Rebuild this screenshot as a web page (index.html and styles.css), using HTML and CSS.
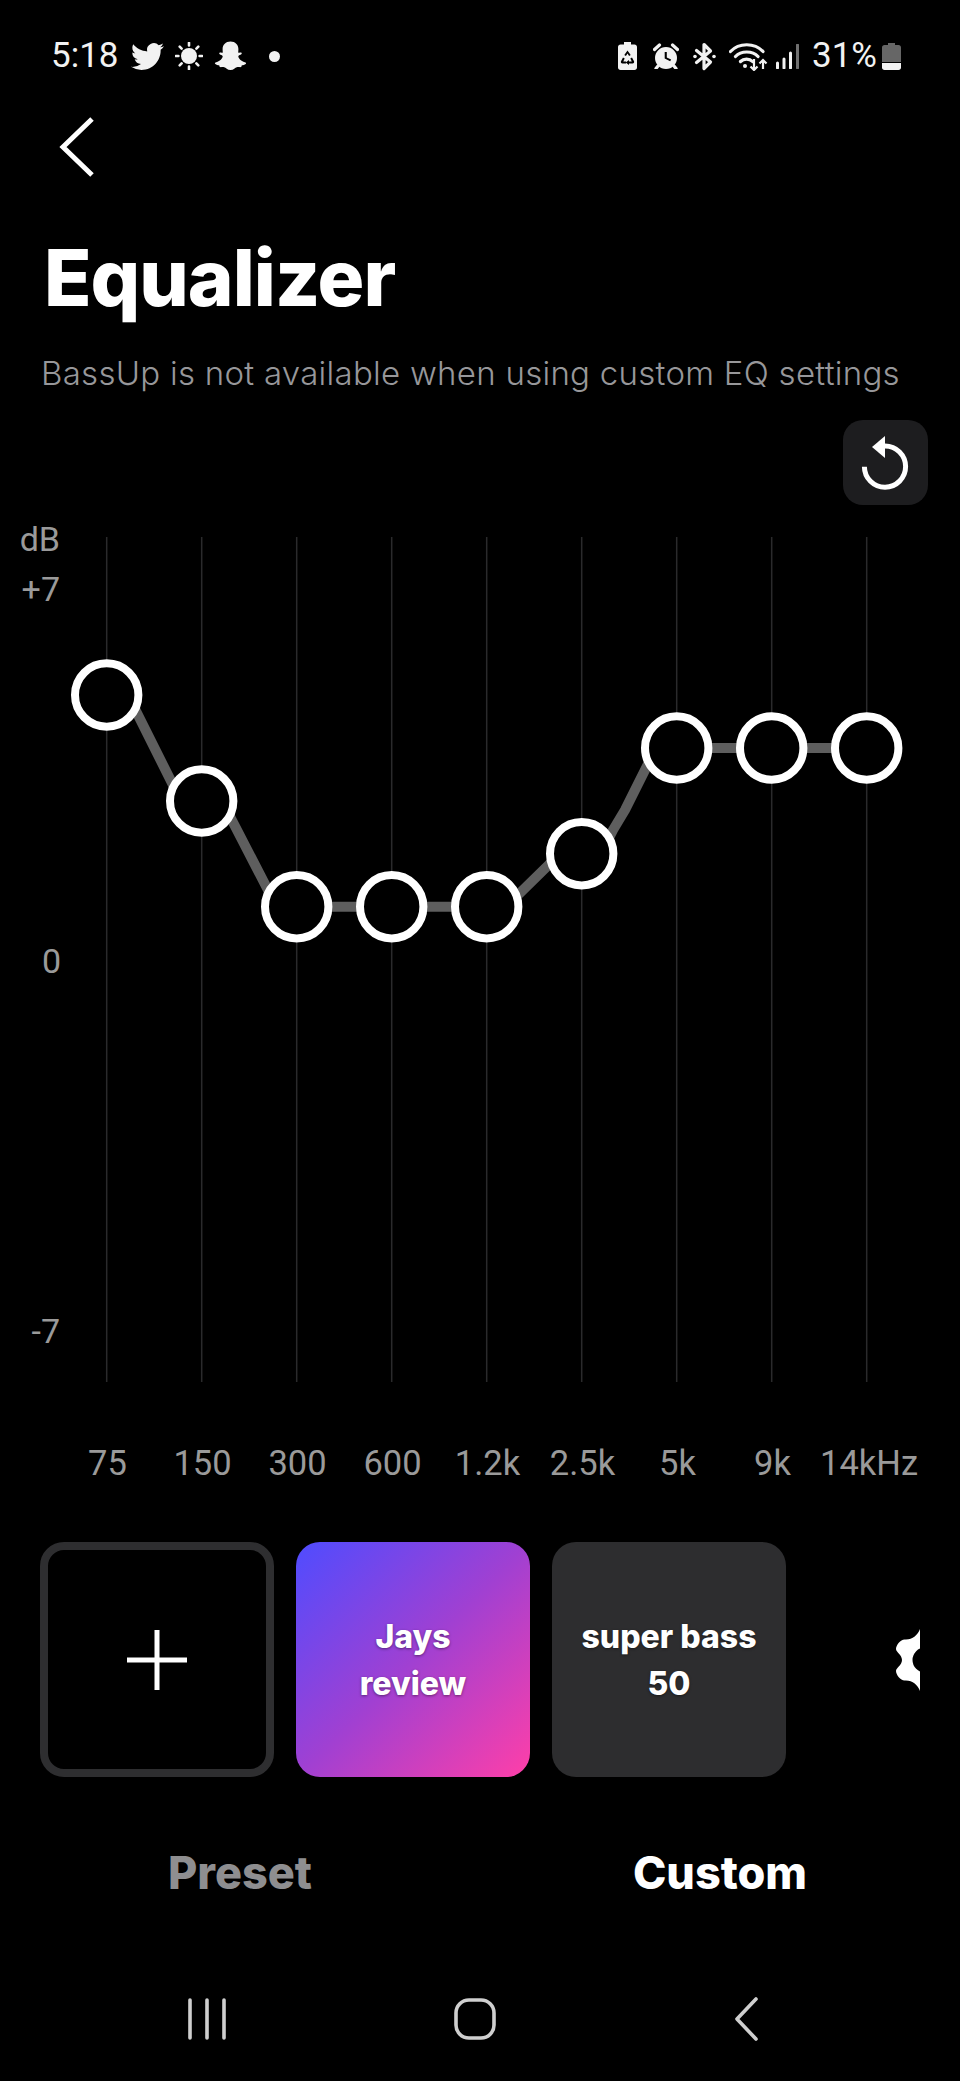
FILE: index.html
```html
<!DOCTYPE html>
<html lang="en">
<head>
<meta charset="utf-8">
<title>Equalizer</title>
<link rel="stylesheet" href="styles.css">
</head>
<body>
<main class="screen">
  <header class="status">
    <div class="status-left">
      <span class="status-text">5:18</span>
      <svg class="ic-twitter" viewBox="0 0 24 24"><path d="M23.953 4.57a10 10 0 01-2.825.775 4.958 4.958 0 002.163-2.723c-.951.555-2.005.959-3.127 1.184a4.92 4.92 0 00-8.384 4.482C7.69 8.095 4.067 6.13 1.64 3.162a4.822 4.822 0 00-.666 2.475c0 1.71.87 3.213 2.188 4.096a4.904 4.904 0 01-2.228-.616v.06a4.923 4.923 0 003.946 4.827 4.996 4.996 0 01-2.212.085 4.936 4.936 0 004.604 3.417 9.867 9.867 0 01-6.102 2.105c-.39 0-.779-.023-1.17-.067a13.995 13.995 0 007.557 2.209c9.053 0 13.998-7.496 13.998-13.985 0-.21 0-.42-.015-.63A9.935 9.935 0 0024 4.59z"/></svg>
      <svg class="ic-sun" viewBox="0 0 28 28"><circle cx="14" cy="14" r="8"/><g class="ray"><path d="M14 .8v2.6M14 24.6v2.6M.8 14h2.6M24.6 14h2.6M4.7 4.7l1.9 1.9M21.4 21.4l1.9 1.9M4.7 23.3l1.9-1.9M21.4 6.6l1.9-1.9"/></g></svg>
      <svg class="ic-snap" viewBox="0 0 33 30"><path d="M16.5 .5c4.7 0 7.9 3.3 7.9 7.6 0 1.3-.1 2.4-.2 3.3.9.5 2 0 2.8.1.9.2 1 1.2.3 1.7-.9.7-2.5 1-2.9 1.9-.3.7.2 1.5.8 2.4 1 1.5 3.4 3.4 6.2 4 .8.2.9.9.3 1.4-1 .8-2.8 1.100-3.700 1.400-.5.2-.4 1.600-1 1.800-1 .3-2.600-.3-4.200.1-1.700.4-3 2.800-6.300 2.800s-4.600-2.400-6.300-2.800c-1.600-.4-3.200.2-4.200-.1-.6-.2-.5-1.600-1-1.800-.9-.3-2.700-.6-3.700-1.400-.6-.5-.5-1.200.3-1.400 2.800-.6 5.200-2.500 6.200-4 .6-.9 1.100-1.700.8-2.400-.4-.9-2-1.200-2.900-1.900-.7-.5-.6-1.500.3-1.700.8-.1 1.900.4 2.800-.1-.1-.9-.2-2-.2-3.300 0-4.300 3.200-7.600 7.900-7.600z"/></svg>
      <span class="status-dot"></span>
    </div>
    <div class="status-right">
      <svg class="ic-batsave" viewBox="0 0 19 28"><path fill-rule="evenodd" d="M6 0h7v2.500h3.500c1.400 0 2.500 1.100 2.500 2.500v20.500c0 1.400-1.100 2.500-2.500 2.500h-14C1.100 28 0 26.900 0 25.500V5c0-1.400 1.100-2.500 2.500-2.500H6zM9.500 8.500L6.300 13l1.600 1 1.600-2.500 1.600 2.500 1.600-1zM5 15.500l-2 3.700c-.5 1 .2 2.300 1.400 2.300H8v-2H5.300l1.400-3zM14 15.500l-1.700 1 1.500 3H11V18l-3.300 2.500L11 23v-1.500h3.600c1.200 0 1.900-1.300 1.400-2.300z"/></svg>
      <svg class="ic-alarm" viewBox="0 0 26 26"><path fill-rule="evenodd" d="M13 4a11 11 0 110 22 11 11 0 010-22zm-1.300 5v6.500l5.500 2.800.9-1.700-4.300-2.200V9z"/><path class="ray-thick" d="M1.500 6.500L6.500 2M24.500 6.500L19.500 2M5 23l-2 2.500M21 23l2 2.500"/></svg>
      <svg class="ic-bt" viewBox="0 0 23 29"><path class="ray-thick" d="M3.500 8.500l14 11.500-6.500 6.500V2.500l6.500 6.500-14 11.500"/><circle cx="2" cy="14.500" r="1.800"/><circle cx="21" cy="14.500" r="1.800"/></svg>
      <svg class="ic-wifi" viewBox="0 0 39 29"><path class="ray-wifi" d="M1.500 9.500c8.500-9 24-9 32.500 0M6.500 14.500c5.500-6 17-6 22.500 0M11.500 19.500c3.200-3.200 9-3.200 12 0"/><circle cx="16" cy="24" r="2"/><path class="ray-thin" d="M25 17v11M21.500 24.500l3.500 3.500 3.500-3.500M34 27V18M30.500 21.500l3.500-3.500 3.500 3.500"/></svg>
      <svg class="ic-signal" viewBox="0 0 24 25"><path class="bar" d="M1.500 19v5M8 15v9M14.500 9v15"/><path class="bar bar-dim" d="M21.500 1v23"/></svg>
      <span class="status-text status-pct">31%</span>
      <svg class="ic-battery" viewBox="0 0 19 27"><path class="bat-body" d="M6 0h7v2h3.500C18 2 19 3 19 4.500V19H0V4.500C0 3 1 2 2.500 2H6z"/><path d="M0 20h19v4.500c0 1.500-1 2.500-2.500 2.500h-14C1 27 0 26 0 24.500z"/></svg>
    </div>
  </header>

  <button class="back" aria-label="Back">
    <svg viewBox="0 0 36 62"><path d="M34 3L5 31 34 59"/></svg>
  </button>

  <h1 class="title">Equalizer</h1>
  <p class="subtitle">BassUp is not available when using custom EQ settings</p>

  <div class="reset-row">
    <button class="reset" aria-label="Reset">
      <svg viewBox="0 0 85 85"><path class="reset-arc" d="M42 26A20.600 20.600 0 1 1 21.400 46.700"/><path class="reset-head" d="M42 16V38L29 27z"/></svg>
    </button>
  </div>

  <svg class="chart" viewBox="0 515 960 875">
    <g class="grid">
      <path d="M106.700 537V1382M201.700 537V1382M296.700 537V1382M391.700 537V1382M486.700 537V1382M581.700 537V1382M676.700 537V1382M771.700 537V1382M866.700 537V1382"/>
    </g>
    <text class="axis" x="60" y="551">dB</text>
    <text class="axis" x="60" y="601">+7</text>
    <text class="axis" x="61" y="973">0</text>
    <text class="axis" x="60" y="1343">-7</text>
    <path class="curve" d="M106.700 695H128L181 801H201.700H222L276.600 906.700H486.700H506L560 853.700H581.700H601L613 830L625 810L656 748H866.700"/>
    <g class="nodes">
      <circle cx="106.700" cy="695" r="31.700"/>
      <circle cx="201.700" cy="801" r="31.700"/>
      <circle cx="296.700" cy="906.700" r="31.700"/>
      <circle cx="391.700" cy="906.700" r="31.700"/>
      <circle cx="486.700" cy="906.700" r="31.700"/>
      <circle cx="581.700" cy="853.700" r="31.700"/>
      <circle cx="676.700" cy="748" r="31.700"/>
      <circle cx="771.700" cy="748" r="31.700"/>
      <circle cx="866.700" cy="748" r="31.700"/>
    </g>
  </svg>

  <div class="freqs">
    <span>75</span><span>150</span><span>300</span><span>600</span><span>1.2k</span><span>2.5k</span><span>5k</span><span>9k</span><span>14kHz</span>
  </div>

  <section class="cards">
    <div class="card card-add">
      <svg viewBox="0 0 60 60"><path d="M30 0V60M0 30H60"/></svg>
    </div>
    <div class="card card-grad">Jays<br>review</div>
    <div class="card card-dark">super bass<br>50</div>
    <div class="card card-gear">
      <svg viewBox="-32 -32 64 64"><path fill-rule="evenodd" d="M-5-31C-7-25-13-20-20-20.500C-24-21-29-15-29-11C-29-8-23-5-23 0C-23 5-29 8-29 11C-29 15-24 21-20 20.500C-13 20-7 25-5 31H5C7 25 13 20 20 20.500C24 21 29 15 29 11C29 8 23 5 23 0C23-5 29-8 29-11C29-15 24-21 20-20.500C13-20 7-25 5-31zM0-12.500a12.500 12.500 0 1 0 0 25a12.500 12.500 0 1 0 0-25z"/></svg>
    </div>
  </section>

  <nav class="tabs">
    <span class="tab">Preset</span>
    <span class="tab tab-active">Custom</span>
  </nav>

  <footer class="navbar">
    <svg class="nav-recents" viewBox="0 0 38 42"><path d="M2 2V40M19 2V40M36 2V40"/></svg>
    <svg class="nav-home" viewBox="0 0 42 42"><rect x="2" y="2" width="38" height="38" rx="13"/></svg>
    <svg class="nav-back" viewBox="0 0 24 44"><path d="M22 2L3 22 22 42"/></svg>
  </footer>
</main>
</body>
</html>
```
FILE: styles.css
```css
* { box-sizing: border-box; }
html, body { margin: 0; padding: 0; background: #000; }
.screen {
  width: 960px;
  height: 2081px;
  background: #000;
  color: #fff;
  overflow: hidden;
  font-family: "Inter", "Liberation Sans", sans-serif;
}
svg { display: block; fill: #f2f2f2; }

.status {
  display: flex;
  justify-content: space-between;
  align-items: center;
  height: 30px;
  margin-top: 41px;
  padding: 0 59px 0 51px;
}
.status-left, .status-right { display: flex; align-items: center; }
.status-text { font: 400 35px/30px "Roboto", sans-serif; color: #f2f2f2; }
.ic-twitter { width: 33px; height: 33px; margin-left: 12px; }
.ic-sun { width: 28px; height: 28px; margin-left: 11px; }
.ray path { stroke: #f2f2f2; stroke-width: 2.6; stroke-linecap: round; fill: none; }
.ic-snap { width: 33px; height: 30px; margin-left: 11px; }
.status-dot { width: 11px; height: 11px; border-radius: 50%; background: #f2f2f2; margin-left: 22px; }
.ic-batsave { width: 19px; height: 28px; }
.ic-alarm { width: 26px; height: 26px; margin-left: 16px; }
.ray-thick { fill: none; stroke: #f2f2f2; stroke-width: 3.2; stroke-linecap: round; stroke-linejoin: round; }
.ic-bt { width: 23px; height: 29px; margin-left: 14px; }
.ic-wifi { width: 39px; height: 29px; margin-left: 13px; }
.ray-wifi { fill: none; stroke: #f2f2f2; stroke-width: 3.2; stroke-linecap: round; }
.ray-thin { fill: none; stroke: #f2f2f2; stroke-width: 2.2; }
.ic-signal { width: 24px; height: 25px; margin-left: 8px; }
.bar { fill: none; stroke: #f2f2f2; stroke-width: 3; stroke-linecap: round; }
.bar-dim { stroke: #707070; }
.status-pct { margin-left: 12px; }
.ic-battery { width: 19px; height: 27px; margin-left: 5px; }
.bat-body { fill: #666; }

.back {
  display: block;
  width: 36px;
  height: 62px;
  margin: 45px 0 0 58px;
  padding: 0;
  border: 0;
  background: none;
}
.back svg { width: 36px; height: 62px; fill: none; }
.back path { fill: none; stroke: #fff; stroke-width: 5; }

.title {
  margin: 52px 0 0 44px;
  font: 800 78px/96px "Inter", sans-serif;
  letter-spacing: -1px;
  color: #fff;
}
.subtitle {
  margin: 27px 0 0 41px;
  font: 300 33px/40px "Inter", sans-serif;
  letter-spacing: 0.27px;
  color: #97979a;
  white-space: nowrap;
}

.reset-row { display: flex; justify-content: flex-end; padding-right: 32px; margin-top: 27px; }
.reset {
  display: block;
  width: 85px;
  height: 85px;
  padding: 0;
  border: 0;
  border-radius: 20px;
  background: #1d1d1f;
}
.reset svg { width: 85px; height: 85px; }
.reset-arc { fill: none; stroke: #fff; stroke-width: 5; }
.reset-head { fill: #fff; }

.chart { display: block; width: 960px; height: 875px; margin-top: 10px; }
.grid path { fill: none; stroke: #2a2a2c; stroke-width: 1.500; }
.axis { font: 400 34px "Roboto", sans-serif; fill: #9a9a9a; text-anchor: end; }
.curve { fill: none; stroke: #5e5e5e; stroke-width: 10; stroke-linejoin: round; }
.nodes circle { fill: #000; stroke: #fff; stroke-width: 8; }

.freqs {
  display: grid;
  grid-template-columns: repeat(9, 95px);
  padding-left: 60px;
  margin-top: 53px;
  font: 400 34.500px/40px "Roboto", sans-serif;
  color: #9a9a9a;
  text-align: center;
  white-space: nowrap;
}

.cards {
  display: flex;
  gap: 22px;
  width: 880px;
  margin: 59px 0 0 40px;
  overflow: hidden;
}
.card {
  flex: 0 0 234px;
  height: 235px;
  border-radius: 24px;
  display: flex;
  align-items: center;
  justify-content: center;
  text-align: center;
  font: 800 32px/47px "Inter", sans-serif;
  color: #fff;
  text-shadow: 0 1px 3px rgba(0, 0, 0, .45);
}
.card-add { border: 8px solid #2e2e30; background: #000; }
.card-add svg { width: 60px; height: 60px; fill: none; }
.card-add path { stroke: #fff; stroke-width: 5; fill: none; }
.card-grad { background: linear-gradient(135deg, #4f4cff 0%, #a040d2 50%, #ff3fa8 100%); }
.card-dark { background: #2d2d2f; }
.card-gear { background: #000; }
.card-gear svg { width: 64px; height: 64px; fill: #fff; }

.tabs { display: grid; grid-template-columns: 480px 480px; margin-top: 66px; text-align: center; }
.tab { font: 800 45px/60px "Inter", sans-serif; color: #8e8e90; }
.tab-active { color: #fff; }

.navbar {
  display: flex;
  align-items: center;
  margin-top: 94px;
  height: 44px;
  padding-left: 188px;
}
.navbar svg { fill: none; }
.navbar path, .navbar rect { fill: none; stroke: #cfcfcf; stroke-width: 3.600; stroke-linecap: round; stroke-linejoin: round; }
.nav-recents { width: 38px; height: 42px; }
.nav-home { width: 42px; height: 42px; margin-left: 228px; }
.nav-back { width: 24px; height: 44px; margin-left: 238px; }
```
